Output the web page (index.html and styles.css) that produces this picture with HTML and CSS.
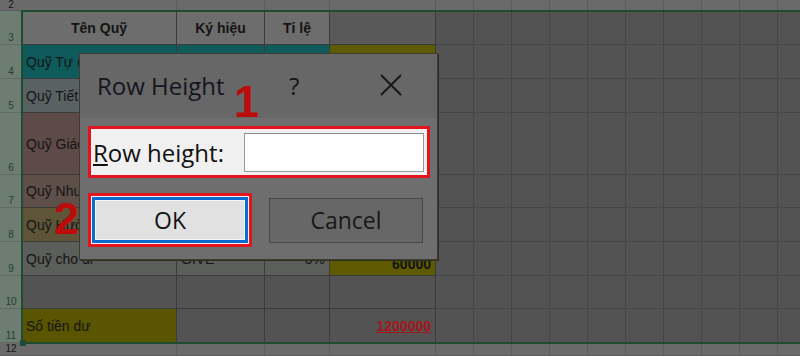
FILE: index.html
```html
<!DOCTYPE html>
<html lang="vi">
<head>
    <meta charset="UTF-8">
    <meta name="viewport" content="width=device-width, initial-scale=1.0">
    <title>Row Height</title>
    <link rel="stylesheet" href="styles.css">
</head>
<body>
    <div class="sheet">
        <div class="row off edge-top">
            <div class="num">2</div><div></div><div></div><div></div><div></div><div class="rest"></div>
        </div>
        <div class="row">
            <div class="num">3</div>
            <div class="t th">Tên Quỹ</div>
            <div class="t th">Ký hiệu</div>
            <div class="t th">Tỉ lệ</div>
            <div class="t th-blank"></div>
            <div class="rest"></div>
        </div>
        <div class="row">
            <div class="num">4</div>
            <div class="t teal">Quỹ Tự do</div>
            <div class="t teal"></div>
            <div class="t teal"></div>
            <div class="t olive"></div>
            <div class="rest"></div>
        </div>
        <div class="row">
            <div class="num">5</div>
            <div class="t slate">Quỹ Tiết kiệm</div>
            <div class="t slate"></div>
            <div class="t slate"></div>
            <div class="t olive"></div>
            <div class="rest"></div>
        </div>
        <div class="row tall">
            <div class="num">6</div>
            <div class="t brown">Quỹ Giáo dục</div>
            <div class="t brown"></div>
            <div class="t brown"></div>
            <div class="t olive"></div>
            <div class="rest"></div>
        </div>
        <div class="row short">
            <div class="num">7</div>
            <div class="t tan">Quỹ Nhu cầu</div>
            <div class="t tan"></div>
            <div class="t tan"></div>
            <div class="t olive"></div>
            <div class="rest"></div>
        </div>
        <div class="row">
            <div class="num">8</div>
            <div class="t khaki">Quỹ Hưởng thụ</div>
            <div class="t khaki"></div>
            <div class="t khaki"></div>
            <div class="t olive"></div>
            <div class="rest"></div>
        </div>
        <div class="row">
            <div class="num">9</div>
            <div class="t stone">Quỹ cho đi</div>
            <div class="t stone">GIVE</div>
            <div class="t stone right">5%</div>
            <div class="t olive right bottom bold small">60000</div>
            <div class="rest"></div>
        </div>
        <div class="row short">
            <div class="num">10</div>
            <div class="t"></div><div class="t"></div><div class="t"></div><div class="t"></div>
            <div class="rest"></div>
        </div>
        <div class="row">
            <div class="num">11</div>
            <div class="t gold">Số tiền dư</div>
            <div class="t"></div>
            <div class="t"></div>
            <div class="t right total">1200000</div>
            <div class="rest"></div>
        </div>
        <div class="row off edge-bottom">
            <div class="num">12</div><div></div><div></div><div></div><div></div><div class="rest"></div>
        </div>

        <div class="selection"></div>
        <div class="handle"></div>
    </div>

    <div class="dialog">
        <div class="dialog-title">
            <span class="title-text">Row Height</span>
            <span class="help">?</span>
            <svg class="close" width="22" height="22" viewBox="0 0 22 22">
                <path d="M1 1 L21 21 M21 1 L1 21" stroke="#161616" stroke-width="1.8" fill="none"/>
            </svg>
        </div>
        <div class="dialog-body">
            <div class="field mark">
                <label class="field-label"><u>R</u>ow height:</label>
                <div class="field-input"></div>
            </div>
            <div class="actions">
                <div class="ok-mark mark">
                    <button class="btn btn-ok">OK</button>
                </div>
                <button class="btn btn-cancel">Cancel</button>
            </div>
        </div>
    </div>

    <div class="step step-one">1</div>
    <div class="step step-two">2</div>
</body>
</html>
```

FILE: styles.css
```css
* {
    margin: 0;
    padding: 0;
    box-sizing: border-box;
}

body {
    position: relative;
    width: 800px;
    height: 356px;
    overflow: hidden;
    background: #535353;
    font-family: 'Liberation Sans', Arial, sans-serif;
    color: #141414;
}

/* sheet */

.sheet {
    position: relative;
    height: 356px;
}

.row {
    display: grid;
    grid-template-columns: 22px 155px 88px 65px 106px 1fr;
    height: 34px;
}

.row.short { height: 33px; }
.row.tall { height: 62px; }
.row.edge-top { height: 11px; }
.row.edge-bottom { height: 13px; }

.row > div {
    display: flex;
    align-items: center;
    padding: 0 4px;
    background: #535353;
    border-right: 1px solid #474747;
    border-bottom: 1px solid #474747;
    font-size: 14px;
    white-space: nowrap;
    overflow: hidden;
}

.row > .num {
    justify-content: center;
    align-items: flex-end;
    padding: 0 0 1px;
    background: #6e7d71;
    color: #22402c;
    font-size: 10px;
    line-height: 11px;
    border-right: none;
    border-bottom-color: #5f6c62;
}

.row > .rest {
    padding: 0;
    border-right: none;
    background-image: repeating-linear-gradient(90deg, transparent 0 37px, #474747 37px 38px);
}

.row.off > div {
    background-color: #6a6a6a;
    border-color: #5c5c5c;
}

.row.off > .num {
    align-items: center;
    padding: 0;
    color: #151515;
    line-height: 10px;
}

.row.off > .rest {
    background-image: repeating-linear-gradient(90deg, transparent 0 37px, #5c5c5c 37px 38px);
}

.row > .t { border-color: #3b3b3b; }

.row > .th {
    justify-content: center;
    background: #6d6d6d;
    font-weight: bold;
}

.row > .th-blank { background: #595959; }

.row > .teal { background: #0f5b5b; }
.row > .slate { background: #596262; }
.row > .brown { background: #5e4b48; }
.row > .tan { background: #5e5049; }
.row > .khaki { background: #5e5539; }
.row > .stone { background: #5b5e5a; }
.row > .olive { background: #5d5a00; }
.row > .gold { background: #5a5500; }

.row > .right { justify-content: flex-end; }
.row > .bottom { align-items: flex-end; padding-bottom: 3px; }
.bold { font-weight: bold; }
.small { font-size: 12px; }

.row > .total {
    color: #a5161a;
    font-weight: bold;
    text-decoration: underline;
}

.selection {
    position: absolute;
    left: 21px;
    top: 10px;
    right: 0;
    height: 334px;
    border: 2px solid #1f4b33;
    border-right: none;
}

.handle {
    position: absolute;
    left: 20px;
    top: 340px;
    width: 6px;
    height: 6px;
    background: #1f4b33;
}

/* dialog */

.dialog {
    position: absolute;
    left: 79px;
    top: 53px;
    width: 359px;
    height: 207px;
    background: #6e6e6e;
    border: 1px solid #3c3c30;
    box-shadow: 1px 1px 0 #2e2e22;
    font-family: 'Open Sans', 'Noto Sans', sans-serif;
    color: #151520;
}

.dialog-title {
    display: flex;
    align-items: center;
    height: 64px;
    padding: 0 35px 2px 17px;
    background: #676767;
    font-size: 24px;
}

.title-text { flex: 1; }

.help {
    width: 12px;
    margin-right: 79px;
}

.close { display: block; }

.dialog-body {
    padding: 8px 7px 12px 8px;
}

.mark {
    border: 3px solid #e3141c;
}

.field {
    display: flex;
    align-items: center;
    height: 52px;
    padding: 0 3px 0 2px;
    background: #f0f0f0;
}

.field-label {
    flex: 1;
    font-size: 24px;
    color: #111;
}

.field-input {
    width: 180px;
    height: 39px;
    background: #fff;
    border: 1px solid #9a9a9a;
    border-top-color: #8a8a8a;
}

.actions {
    display: flex;
    align-items: center;
    gap: 17px;
    margin-top: 15px;
    height: 54px;
}

.ok-mark {
    width: 164px;
    height: 54px;
    padding: 1px;
    background: #f4f4f4;
}

.btn {
    font-family: 'Open Sans', 'Noto Sans', sans-serif;
    font-size: 23px;
    color: #141414;
}

.btn-ok {
    width: 100%;
    height: 100%;
    background: #e1e1e1;
    border: 3px solid #0a6cd0;
    box-shadow: inset 0 0 0 1px #f6f6f6;
}

.btn-cancel {
    width: 154px;
    height: 45px;
    background: #676767;
    border: 1px solid #474747;
    color: #181818;
}

/* step numbers */

.step {
    position: absolute;
    font-family: 'Liberation Sans', Arial, sans-serif;
    font-weight: bold;
    font-size: 45px;
    line-height: 45px;
    color: #bb0b0b;
}

.step-one {
    left: 234px;
    top: 79px;
}

.step-two {
    left: 54px;
    top: 196px;
}
```
